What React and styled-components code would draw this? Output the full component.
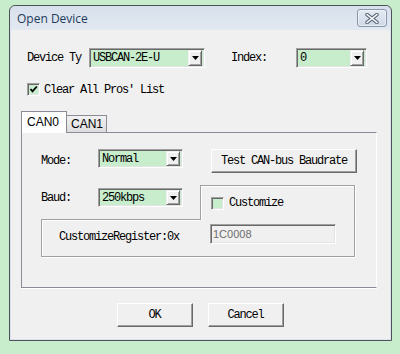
import React from 'react';
import styled, { createGlobalStyle } from 'styled-components';

const mono = `"Liberation Mono", "DejaVu Sans Mono", monospace`;
const sans = `"Liberation Sans", Arial, sans-serif`;

const GlobalStyle = createGlobalStyle`
  html, body {
    margin: 0;
    padding: 0;
    background: #c7edcc;
  }
  body {
    width: 400px;
    height: 354px;
    overflow: hidden;
  }
`;

const Window = styled.div`
  box-sizing: border-box;
  width: 383px;
  height: 336px;
  margin: 5px 0 0 9px;
  border: 1px solid #4f5256;
  border-radius: 6px 6px 0 0;
  background: #d9e3ef;
  padding: 0 1px 1px;
  display: flex;
  flex-direction: column;
`;

const TitleBar = styled.div`
  height: 24px;
  flex: none;
  display: flex;
  align-items: center;
  justify-content: space-between;
  padding: 0 3px 0 6px;
  border-radius: 5px 5px 0 0;
  background: linear-gradient(#d6e0ec, #e3e9f1);
  font: 12px "Open Sans", "Noto Sans", sans-serif;
  color: #1e3a5c;
`;

const CloseButton = styled.div`
  box-sizing: border-box;
  width: 30px;
  height: 18px;
  display: flex;
  align-items: center;
  justify-content: center;
  border: 1px solid #8795ab;
  border-radius: 3px;
  background: linear-gradient(#e4eaf2, #cfd9e6);
  box-shadow: inset 0 0 0 1px rgba(255, 255, 255, 0.5);
`;

const Client = styled.div`
  flex: 1;
  background: #f0f0f0;
  display: flex;
  flex-direction: column;
  font: 12px ${mono};
  letter-spacing: -1.2px;
  color: #000;
`;

const Row = styled.div`
  display: flex;
  align-items: center;
  height: ${p => p.$h || 20}px;
  margin-top: ${p => p.$top || 0}px;
  padding-left: ${p => p.$left || 0}px;
`;

const Label = styled.span`
  width: ${p => p.$w}px;
  flex: none;
  white-space: pre;
`;

const Combo = styled.div`
  box-sizing: border-box;
  width: ${p => p.$w}px;
  height: ${p => p.$h || 20}px;
  flex: none;
  display: flex;
  align-items: center;
  padding: 0 2px 0 3px;
  background: #c7edcc;
  border: 1px solid;
  border-color: #a0a0a0 #fff #fff #a0a0a0;
  box-shadow: inset 1px 1px 0 #696969, inset -1px -1px 0 #e3e3e3;
  white-space: pre;
`;

const DropButton = styled.div`
  box-sizing: border-box;
  width: 14px;
  height: ${p => p.$h || 16}px;
  margin-left: auto;
  display: flex;
  align-items: center;
  justify-content: center;
  background: #f0f0f0;
  border: 1px solid;
  border-color: #f0f0f0 #696969 #696969 #f0f0f0;
  box-shadow: inset 1px 1px 0 #fff, inset -1px -1px 0 #a0a0a0;
`;

const Check = styled.div`
  box-sizing: border-box;
  width: 13px;
  height: 13px;
  flex: none;
  display: flex;
  align-items: center;
  justify-content: center;
  background: #c7edcc;
  border: 1px solid;
  border-color: #a0a0a0 #fff #fff #a0a0a0;
  box-shadow: inset 1px 1px 0 #696969, inset -1px -1px 0 #e3e3e3;
  margin-right: ${p => p.$gap || 4}px;
`;

const TabSection = styled.div`
  margin-top: 15px;
  padding-left: 10px;
  display: flex;
  flex-direction: column;
`;

const TabStrip = styled.div`
  display: flex;
  align-items: flex-end;
  height: 22px;
  margin-bottom: -1px;
  position: relative;
  z-index: 1;
`;

const Tab = styled.div`
  box-sizing: border-box;
  height: ${p => (p.$active ? 22 : 18)}px;
  width: ${p => p.$w}px;
  padding-left: ${p => (p.$active ? 5 : 4)}px;
  display: flex;
  align-items: center;
  font: 12px ${sans};
  letter-spacing: 0;
  border: 1px solid #898c95;
  border-bottom: ${p => (p.$active ? 'none' : '1px solid #898c95')};
  border-left: ${p => (p.$active ? '1px solid #898c95' : 'none')};
  background: ${p => (p.$active ? '#fff' : 'linear-gradient(#f2f2f2, #dcdcdc)')};
  padding-bottom: ${p => (p.$active ? 1 : 0)}px;
`;

const Panel = styled.div`
  box-sizing: border-box;
  width: 356px;
  height: 156px;
  border: 1px solid #898c95;
  border-right-color: #fff;
  box-shadow: 0 1px 0 #fff;
  padding: 16px 0 0 19px;
  display: flex;
  flex-direction: column;
`;

const ModeRow = styled.div`
  display: flex;
  align-items: flex-start;
  height: 24px;
`;

const Button = styled.div`
  box-sizing: border-box;
  width: ${p => p.$w}px;
  height: 24px;
  margin-left: ${p => p.$ml || 0}px;
  flex: none;
  display: flex;
  align-items: center;
  justify-content: center;
  background: #f0f0f0;
  border: 1px solid;
  border-color: #fff #696969 #696969 #fff;
  box-shadow: inset -1px -1px 0 #a0a0a0;
  white-space: pre;
`;

const GroupGrid = styled.div`
  margin-top: 12px;
  display: grid;
  grid-template-columns: 159px 155px;
  grid-template-rows: 35px 37px;
`;

const BaudCell = styled.div`
  box-sizing: border-box;
  display: flex;
  align-items: flex-start;
  padding-top: 3px;
  border-bottom: 1px solid #a0a0a0;
  box-shadow: 0 1px 0 #fff;
`;

const CustomCell = styled.div`
  box-sizing: border-box;
  display: flex;
  align-items: flex-start;
  padding: 11px 0 0 10px;
  border: 1px solid #a0a0a0;
  border-bottom: none;
  box-shadow: inset 0 1px 0 #fff, inset 1px 0 0 #fff, 1px 0 0 #fff;
`;

const RegisterCell = styled.div`
  grid-column: 1 / span 2;
  box-sizing: border-box;
  display: flex;
  align-items: flex-start;
  padding: 4px 0 0 17px;
  border: 1px solid #a0a0a0;
  border-top: none;
  box-shadow: inset 1px 0 0 #fff, 1px 1px 0 #fff;
`;

const Edit = styled.div`
  box-sizing: border-box;
  width: 126px;
  height: 20px;
  display: flex;
  align-items: center;
  padding-left: 2px;
  background: #f0f0f0;
  border: 1px solid;
  border-color: #a0a0a0 #fff #fff #a0a0a0;
  box-shadow: inset 1px 1px 0 #696969, inset -1px -1px 0 #e3e3e3;
  font: 11px ${sans};
  letter-spacing: 0;
  color: #6d6d6d;
`;

const Footer = styled.div`
  margin-top: 15px;
  display: flex;
  justify-content: center;
  gap: 15px;
  padding-right: 1px;
`;

const Arrow = () => (
  <svg width="7" height="4" viewBox="0 0 7 4">
    <polygon points="0,0 7,0 3.5,4" fill="#000" />
  </svg>
);

const Tick = () => (
  <svg width="9" height="9" viewBox="0 0 9 9">
    <polyline points="1.5,4 3.5,6.3 7.8,1.5" fill="none" stroke="#000" strokeWidth="1.8" />
  </svg>
);

const CloseGlyph = () => (
  <svg width="14" height="11" viewBox="0 0 14 11">
    <path d="M2 1.5 L12 9.5 M12 1.5 L2 9.5" stroke="#5d6b80" strokeWidth="3.6" strokeLinecap="round" />
    <path d="M2 1.5 L12 9.5 M12 1.5 L2 9.5" stroke="#fff" strokeWidth="1.6" strokeLinecap="round" />
  </svg>
);

const DropCombo = ({ w, h, children }) => (
  <Combo $w={w} $h={h}>
    {children}
    <DropButton $h={h ? h - 4 : 16}>
      <Arrow />
    </DropButton>
  </Combo>
);

export default function App() {
  return (
    <>
      <GlobalStyle />
      <Window>
        <TitleBar>
          <span>Open Device</span>
          <CloseButton>
            <CloseGlyph />
          </CloseButton>
        </TitleBar>
        <Client>
          <Row $top={18} $left={16}>
            <Label $w={62}>Device Ty</Label>
            <DropCombo w={116}>USBCAN-2E-U</DropCombo>
            <Label $w={26} />
            <Label $w={65}>Index:</Label>
            <DropCombo w={71}>0</DropCombo>
          </Row>
          <Row $top={15} $left={16} $h={13}>
            <Check>
              <Tick />
            </Check>
            <span>Clear All Pros' List</span>
          </Row>
          <TabSection>
            <TabStrip>
              <Tab $active $w={46}>CAN0</Tab>
              <Tab $w={40}>CAN1</Tab>
            </TabStrip>
            <Panel>
              <ModeRow>
                <Label $w={57} style={{ alignSelf: 'center' }}>Mode:</Label>
                <DropCombo w={85} h={19}>Normal</DropCombo>
                <Button $w={146} $ml={28}>Test CAN-bus Baudrate</Button>
              </ModeRow>
              <GroupGrid>
                <BaudCell>
                  <Label $w={57} style={{ lineHeight: '19px', paddingTop: 1 }}>Baud:</Label>
                  <DropCombo w={85} h={19}>250kbps</DropCombo>
                </BaudCell>
                <CustomCell>
                  <Check $gap={5} />
                  <span style={{ lineHeight: '13px' }}>Customize</span>
                </CustomCell>
                <RegisterCell>
                  <Label $w={151} style={{ lineHeight: '20px', paddingTop: 3 }}>CustomizeRegister:0x</Label>
                  <Edit>1C0008</Edit>
                </RegisterCell>
              </GroupGrid>
            </Panel>
          </TabSection>
          <Footer>
            <Button $w={76}>OK</Button>
            <Button $w={76}>Cancel</Button>
          </Footer>
        </Client>
      </Window>
    </>
  );
}
